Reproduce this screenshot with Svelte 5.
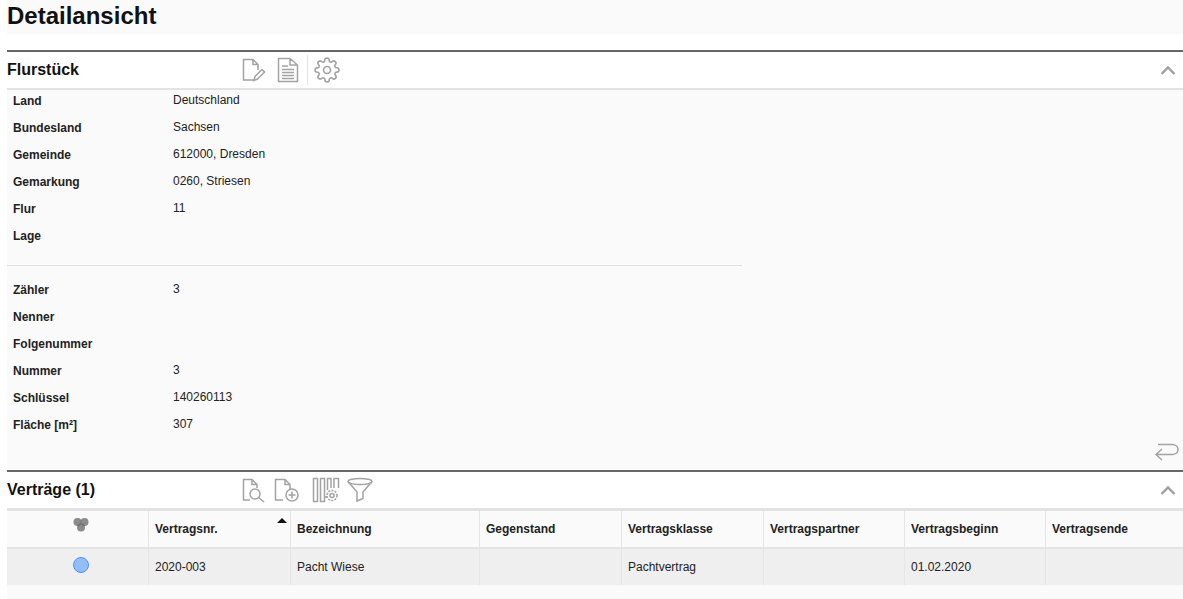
<script>
  const first = [
    ['Land', 'Deutschland'],
    ['Bundesland', 'Sachsen'],
    ['Gemeinde', '612000, Dresden'],
    ['Gemarkung', '0260, Striesen'],
    ['Flur', '11'],
    ['Lage', '']
  ];
  const second = [
    ['Zähler', '3'],
    ['Nenner', ''],
    ['Folgenummer', ''],
    ['Nummer', '3'],
    ['Schlüssel', '140260113'],
    ['Fläche [m²]', '307']
  ];
  const columns = ['Vertragsnr.', 'Bezeichnung', 'Gegenstand', 'Vertragsklasse', 'Vertragspartner', 'Vertragsbeginn', 'Vertragsende'];
  const cells = ['2020-003', 'Pacht Wiese', '', 'Pachtvertrag', '', '01.02.2020', ''];
</script>

{#snippet chevron()}
  <svg class="chevron" width="16" height="10" viewBox="0 0 16 10"><path d="M1.5 9 L8 2.5 L14.5 9" /></svg>
{/snippet}

<div class="page">
  <h1>Detailansicht</h1>

  <section class="flur">
    <header>
      <h2>Flurstück</h2>
      <div class="tools">
        <svg width="26" height="26" viewBox="0 0 26 26">
          <path d="M14 23 H3.5 V2.5 H13 L18 7.5 V13 M13 2.5 V7.5 H18" />
          <path d="M14 23.5 L15 19.5 L22 12.5 L24.5 15 L17.5 22 Z" />
        </svg>
        <svg class="doc" width="22" height="26" viewBox="0 0 22 26">
          <path d="M1.5 24.5 V1.5 H13 L20.5 8 V24.5 Z M13 1.5 V8 H20.5 M5 9 H11 M5 12.5 H17 M5 15.5 H17 M5 18.5 H17 M5 21.5 H17" />
        </svg>
        <span class="sep"></span>
        <svg class="gear" width="26" height="26" viewBox="0 0 24 24">
          <circle cx="12" cy="12" r="3.2" />
          <path d="M19.4 15a1.65 1.65 0 0 0 .33 1.82l.06.06a2 2 0 0 1-2.83 2.83l-.06-.06a1.65 1.65 0 0 0-2.82 1.17V21a2 2 0 0 1-4 0v-.09A1.65 1.65 0 0 0 7.2 19.7l-.06.06a2 2 0 0 1-2.83-2.83l.06-.06a1.65 1.65 0 0 0-1.17-2.82H3a2 2 0 0 1 0-4h.09A1.65 1.65 0 0 0 4.3 7.2l-.06-.06a2 2 0 0 1 2.83-2.83l.06.06a1.65 1.65 0 0 0 2.82-1.17V3a2 2 0 0 1 4 0v.09a1.65 1.65 0 0 0 2.82 1.17l.06-.06a2 2 0 0 1 2.83 2.83l-.06.06a1.65 1.65 0 0 0 1.17 2.82H21a2 2 0 0 1 0 4h-.09A1.65 1.65 0 0 0 19.4 15z" />
        </svg>
      </div>
      {@render chevron()}
    </header>

    <div class="body">
      <dl>
        {#each first as [label, value]}
          <div class="row"><dt>{label}</dt><dd>{value}</dd></div>
        {/each}
      </dl>
      <hr />
      <dl>
        {#each second as [label, value]}
          <div class="row"><dt>{label}</dt><dd>{value}</dd></div>
        {/each}
      </dl>
      <div class="back">
        <svg width="26" height="20" viewBox="0 0 26 20">
          <path d="M4 2.5 H18 C26 2.5 26 12.5 18 12.5 H2 M8 7 L2 12.5 L8 18" />
        </svg>
      </div>
    </div>
  </section>

  <section>
    <header>
      <h2>Verträge (1)</h2>
      <div class="tools second">
        <svg width="26" height="26" viewBox="0 0 26 26">
          <path d="M10 23 H3.5 V2.5 H12 L17 7.5 V11 M12 2.5 V7.5 H17" />
          <circle cx="15" cy="17" r="5" />
          <path d="M18.5 20.5 L24 25" />
        </svg>
        <svg width="28" height="26" viewBox="0 0 28 26">
          <path d="M11 23 H3.5 V2.5 H13 L18 7.5 V12 M13 2.5 V7.5 H18" />
          <circle cx="20" cy="18" r="6" />
          <path d="M20 14.5 V21.5 M16.5 18 H23.5" />
        </svg>
        <svg class="cols" width="28" height="26" viewBox="0 0 28 26">
          <path d="M1.5 1.5 H5.5 V24.5 H1.5 Z M8.5 1.5 H12.5 V24.5 H8.5 Z M15.5 13 V1.5 H19 V11 M22 11 V1.5 H26.5 V11 M12.5 20 H15" />
          <circle cx="20" cy="18.5" r="2" />
          <circle cx="20" cy="18.5" r="5" stroke-dasharray="2 1.2" />
        </svg>
        <svg width="28" height="26" viewBox="0 0 28 26">
          <ellipse cx="14" cy="4.5" rx="12" ry="3" />
          <path d="M2 4.5 L11 15 V24 L17 21.5 V15 L26 4.5" />
        </svg>
      </div>
      {@render chevron()}
    </header>

    <div class="table">
      <div class="tr head">
        <div class="cell icon-cell">
          <svg width="16" height="16" viewBox="0 0 16 16" class="dots">
            <circle cx="4.5" cy="5" r="4" />
            <circle cx="11.5" cy="5" r="4" />
            <circle cx="8" cy="10.5" r="4" />
          </svg>
        </div>
        {#each columns as col, i}
          <div class="cell">
            {col}
            {#if i === 0}<span class="sort"></span>{/if}
          </div>
        {/each}
      </div>
      <div class="tr data">
        <div class="cell icon-cell"><span class="status"></span></div>
        {#each cells as cell}
          <div class="cell">{cell}</div>
        {/each}
      </div>
    </div>
  </section>
</div>

<style>
  :global(body) {
    background: #fff;
    font-family: "Liberation Sans", Arial, sans-serif;
    color: #111;
  }
  .page {
    padding-left: 7px;
    height: 599px;
    overflow: hidden;
    box-sizing: border-box;
  }
  h1 {
    margin: 0 0 16px;
    height: 34px;
    background: #fafafa;
    font-size: 24px;
    line-height: 32px;
    font-weight: bold;
    color: #111;
  }
  section {
    background: #fafafa;
  }
  section:last-child {
    height: 129px;
  }
  header {
    display: flex;
    align-items: center;
    height: 36px;
    background: #fff;
    border-top: 2px solid #666;
    border-bottom: 2px solid #e2e2e2;
    position: relative;
  }
  h2 {
    margin: 0;
    width: 234px;
    font-size: 16px;
    line-height: 36px;
    font-weight: bold;
    color: #111;
    flex-shrink: 0;
  }
  .tools {
    display: flex;
    align-items: center;
    flex: 1;
    gap: 8px;
    margin-left: -1px;
  }
  .tools svg, .back svg {
    fill: none;
    stroke: #a3a3a3;
    stroke-width: 1.5;
  }
  .tools .doc {
    margin-left: 3px;
  }
  .tools.second {
    gap: 6px;
  }
  .tools .cols {
    margin-left: 6px;
  }
  .sep {
    width: 1px;
    height: 30px;
    background: #e4e4e4;
    margin: 0 -2px 0 0;
  }
  .chevron {
    margin-right: 7px;
    fill: none;
    stroke: #a0a0a0;
    stroke-width: 2.4;
  }
  .flur .body {
    height: 380px;
    position: relative;
  }
  dl {
    margin: 0;
  }
  .row {
    display: flex;
    height: 27px;
    font-size: 12px;
  }
  dt {
    width: 160px;
    padding-left: 6px;
    line-height: 22px;
    font-weight: bold;
    color: #222;
  }
  dd {
    margin: 0;
    line-height: 20px;
    color: #222;
  }
  hr {
    width: 735px;
    height: 1px;
    margin: 13px 0 13px;
    border: 0;
    background: #e2e2e2;
  }
  .back {
    position: absolute;
    right: 3px;
    bottom: 8px;
    line-height: 0;
  }
  .table {
    border-top: 1px solid #e2e2e2;
    font-size: 12px;
  }
  .tr {
    display: grid;
    grid-template-columns: 142px 142px 189px 142px 142px 141px 141px 1fr;
  }
  .head {
    height: 38px;
    border-bottom: 2px solid #e4e4e4;
    box-sizing: border-box;
    font-weight: bold;
    background: #fafafa;
  }
  .data {
    height: 36px;
    background: #efefef;
  }
  .cell {
    position: relative;
    display: flex;
    align-items: center;
    padding-left: 6px;
    border-right: 1px solid #e6e6e6;
    color: #222;
  }
  .cell:last-child {
    border-right: 0;
  }
  .icon-cell {
    justify-content: center;
    padding-left: 6px;
    align-items: flex-start;
  }
  .head .icon-cell {
    padding-top: 6px;
  }
  .data .icon-cell {
    padding-top: 8px;
  }
  .dots circle {
    fill: #666;
    fill-opacity: 0.75;
  }
  .status {
    width: 14px;
    height: 14px;
    border-radius: 50%;
    background: #93bdfb;
    border: 1px solid #4c94fb;
  }
  .sort {
    position: absolute;
    right: 3px;
    top: 7px;
    width: 0;
    height: 0;
    border-left: 5px solid transparent;
    border-right: 5px solid transparent;
    border-bottom: 5px solid #111;
  }
</style>
